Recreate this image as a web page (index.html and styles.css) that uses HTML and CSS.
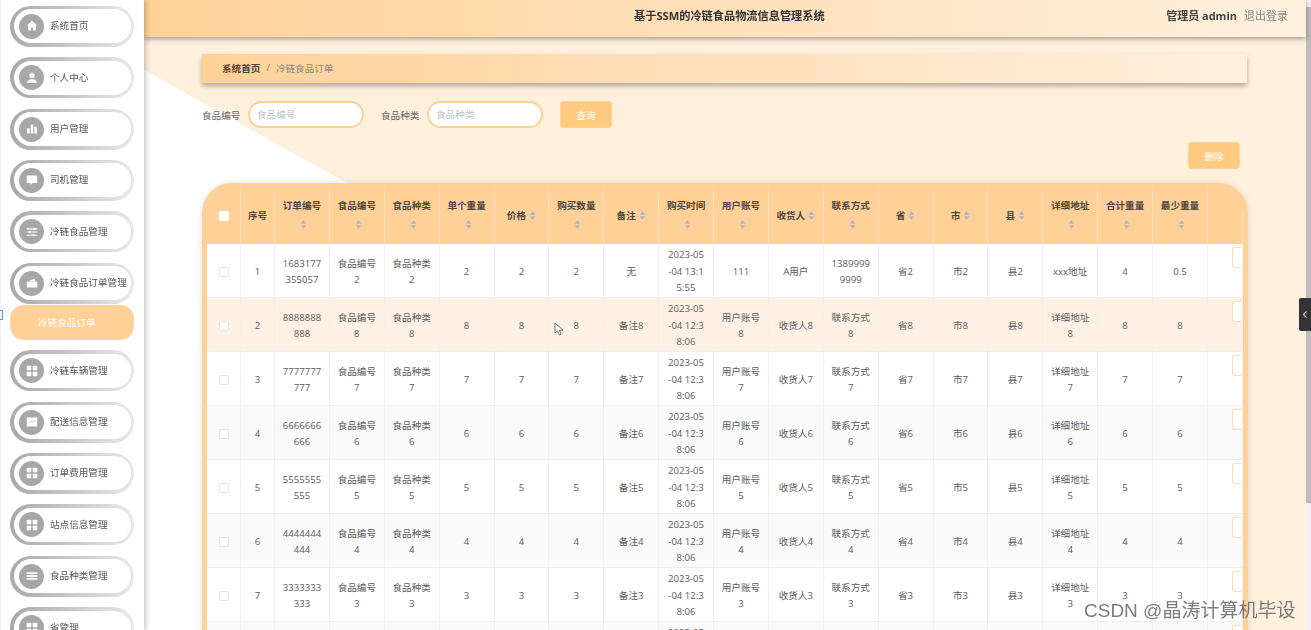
FILE: index.html
```html
<!DOCTYPE html>
<html lang="zh">
<head>
<meta charset="utf-8">
<title>基于SSM的冷链食品物流信息管理系统</title>
<link rel="stylesheet" href="styles.css">
</head>
<body>
<svg class="defs" width="0" height="0" aria-hidden="true">
  <symbol id="i-grid" viewBox="0 0 24 24"><rect x="5" y="5" width="6" height="6" rx=".8"/><rect x="13" y="5" width="6" height="6" rx=".8"/><rect x="5" y="13" width="6" height="6" rx=".8"/><rect x="13" y="13" width="6" height="6" rx=".8"/></symbol>
  <symbol id="i-sort" viewBox="0 0 10 14"><path d="M5 1 9 6H1z"/><path d="M5 13 1 8h8z"/></symbol>
</svg>
<div class="app">
  <aside class="sidebar">
    <a class="nav"><span class="nav-in"><span class="ico"><svg viewBox="0 0 24 24"><path d="M12 5 5 11.500h2V18h3.600v-4h2.800v4H17v-6.500h2z"/></svg></span>系统首页</span></a>
    <a class="nav"><span class="nav-in"><span class="ico"><svg viewBox="0 0 24 24"><circle cx="12" cy="8.500" r="3.500"/><path d="M5.500 18.500c0-3.500 3-5 6.500-5s6.500 1.500 6.500 5z"/></svg></span>个人中心</span></a>
    <a class="nav"><span class="nav-in"><span class="ico"><svg viewBox="0 0 24 24"><rect x="5.500" y="11" width="3.400" height="7"/><rect x="10.300" y="6" width="3.400" height="12"/><rect x="15.100" y="9" width="3.400" height="9"/></svg></span>用户管理</span></a>
    <a class="nav"><span class="nav-in"><span class="ico"><svg viewBox="0 0 24 24"><path d="M5 6h14v10h-6l-3 3v-3H5z"/></svg></span>司机管理</span></a>
    <a class="nav"><span class="nav-in"><span class="ico"><svg viewBox="0 0 24 24"><path d="M5 7h14v1.500H5zM5 11.300h14v1.500H5zM5 15.500h14V17H5z"/><circle cx="15" cy="7.700" r="1.500"/><circle cx="9" cy="12" r="1.500"/><circle cx="14" cy="16.200" r="1.500"/></svg></span>冷链食品管理</span></a>
    <div class="nav-group">
      <a class="nav"><span class="nav-in"><span class="ico"><svg viewBox="0 0 24 24"><path d="M5 10h14v8H5z"/><path d="M7 9.500 15 6l1.500 3.500z"/></svg></span>冷链食品订单管理</span></a>
      <a class="sub">冷链食品订单</a>
    </div>
    <a class="nav"><span class="nav-in"><span class="ico"><svg><use href="#i-grid"/></svg></span>冷链车辆管理</span></a>
    <a class="nav"><span class="nav-in"><span class="ico"><svg viewBox="0 0 24 24"><path d="M5 6h14v12H5zM8 14l3-3 2 2 3-3v-1l-3 3-2-2-3 3z" fill-rule="evenodd"/></svg></span>配送信息管理</span></a>
    <a class="nav"><span class="nav-in"><span class="ico"><svg><use href="#i-grid"/></svg></span>订单费用管理</span></a>
    <a class="nav"><span class="nav-in"><span class="ico"><svg><use href="#i-grid"/></svg></span>站点信息管理</span></a>
    <a class="nav"><span class="nav-in"><span class="ico"><svg viewBox="0 0 24 24"><path d="M5 7h14v2.400H5zM5 10.800h14v2.400H5zM5 14.600h14V17H5z"/></svg></span>食品种类管理</span></a>
    <a class="nav"><span class="nav-in"><span class="ico"><svg><use href="#i-grid"/></svg></span>省管理</span></a>
  </aside>

  <div class="main">
    <header class="topbar">
      <h1 class="title">基于SSM的冷链食品物流信息管理系统</h1>
      <div class="user"><b>管理员 admin</b><a>退出登录</a></div>
    </header>
    <div class="content">
      <nav class="crumb"><b>系统首页</b><i>/</i><span>冷链食品订单</span></nav>
      <form class="search">
        <label class="lbl">食品编号</label><input class="field" placeholder="食品编号">
        <label class="lbl lbl2">食品种类</label><input class="field" placeholder="食品种类">
        <button class="btn btn-q" type="button">查询</button>
      </form>
      <div class="actions"><button class="btn" type="button">删除</button></div>
      <section class="panel">
        <div class="wrap">
        <table>
          <colgroup><col class="c-s"><col class="c-s"><col span="17"><col class="c-a"></colgroup>
          <thead>
            <tr>
              <th class="tight"><span class="chk chk-h"></span></th><th class="tight">序号</th>
              <th>订单编号<svg class="sort"><use href="#i-sort"/></svg></th>
              <th>食品编号<svg class="sort"><use href="#i-sort"/></svg></th>
              <th>食品种类<svg class="sort"><use href="#i-sort"/></svg></th>
              <th>单个重量<svg class="sort"><use href="#i-sort"/></svg></th>
              <th>价格<svg class="sort"><use href="#i-sort"/></svg></th>
              <th>购买数量<svg class="sort"><use href="#i-sort"/></svg></th>
              <th>备注<svg class="sort"><use href="#i-sort"/></svg></th>
              <th>购买时间<svg class="sort"><use href="#i-sort"/></svg></th>
              <th>用户账号<svg class="sort"><use href="#i-sort"/></svg></th>
              <th>收货人<svg class="sort"><use href="#i-sort"/></svg></th>
              <th>联系方式<svg class="sort"><use href="#i-sort"/></svg></th>
              <th>省<svg class="sort"><use href="#i-sort"/></svg></th>
              <th>市<svg class="sort"><use href="#i-sort"/></svg></th>
              <th>县<svg class="sort"><use href="#i-sort"/></svg></th>
              <th>详细地址<svg class="sort"><use href="#i-sort"/></svg></th>
              <th>合计重量<svg class="sort"><use href="#i-sort"/></svg></th>
              <th>最少重量<svg class="sort"><use href="#i-sort"/></svg></th>
              <th></th>
            </tr>
          </thead>
          <tbody>
            <tr><td><span class="chk"></span></td><td>1</td><td>1683177355057</td><td>食品编号2</td><td>食品种类2</td><td>2</td><td>2</td><td>2</td><td>无</td><td class="date">2023-05<br>-04 13:1<br>5:55</td><td>111</td><td>A用户</td><td>13899999999</td><td>省2</td><td>市2</td><td>县2</td><td>xxx地址</td><td>4</td><td>0.5</td><td class="op"><span class="op-btn"></span></td></tr>
            <tr class="hover"><td><span class="chk"></span></td><td>2</td><td>8888888888</td><td>食品编号8</td><td>食品种类8</td><td>8</td><td>8</td><td>8</td><td>备注8</td><td class="date">2023-05<br>-04 12:3<br>8:06</td><td>用户账号8</td><td>收货人8</td><td>联系方式8</td><td>省8</td><td>市8</td><td>县8</td><td>详细地址8</td><td>8</td><td>8</td><td class="op"><span class="op-btn"></span></td></tr>
            <tr><td><span class="chk"></span></td><td>3</td><td>7777777777</td><td>食品编号7</td><td>食品种类7</td><td>7</td><td>7</td><td>7</td><td>备注7</td><td class="date">2023-05<br>-04 12:3<br>8:06</td><td>用户账号7</td><td>收货人7</td><td>联系方式7</td><td>省7</td><td>市7</td><td>县7</td><td>详细地址7</td><td>7</td><td>7</td><td class="op"><span class="op-btn"></span></td></tr>
            <tr class="alt"><td><span class="chk"></span></td><td>4</td><td>6666666666</td><td>食品编号6</td><td>食品种类6</td><td>6</td><td>6</td><td>6</td><td>备注6</td><td class="date">2023-05<br>-04 12:3<br>8:06</td><td>用户账号6</td><td>收货人6</td><td>联系方式6</td><td>省6</td><td>市6</td><td>县6</td><td>详细地址6</td><td>6</td><td>6</td><td class="op"><span class="op-btn"></span></td></tr>
            <tr><td><span class="chk"></span></td><td>5</td><td>5555555555</td><td>食品编号5</td><td>食品种类5</td><td>5</td><td>5</td><td>5</td><td>备注5</td><td class="date">2023-05<br>-04 12:3<br>8:06</td><td>用户账号5</td><td>收货人5</td><td>联系方式5</td><td>省5</td><td>市5</td><td>县5</td><td>详细地址5</td><td>5</td><td>5</td><td class="op"><span class="op-btn"></span></td></tr>
            <tr class="alt"><td><span class="chk"></span></td><td>6</td><td>4444444444</td><td>食品编号4</td><td>食品种类4</td><td>4</td><td>4</td><td>4</td><td>备注4</td><td class="date">2023-05<br>-04 12:3<br>8:06</td><td>用户账号4</td><td>收货人4</td><td>联系方式4</td><td>省4</td><td>市4</td><td>县4</td><td>详细地址4</td><td>4</td><td>4</td><td class="op"><span class="op-btn"></span></td></tr>
            <tr><td><span class="chk"></span></td><td>7</td><td>3333333333</td><td>食品编号3</td><td>食品种类3</td><td>3</td><td>3</td><td>3</td><td>备注3</td><td class="date">2023-05<br>-04 12:3<br>8:06</td><td>用户账号3</td><td>收货人3</td><td>联系方式3</td><td>省3</td><td>市3</td><td>县3</td><td>详细地址3</td><td>3</td><td>3</td><td class="op"><span class="op-btn"></span></td></tr>
            <tr class="alt"><td><span class="chk"></span></td><td>8</td><td>2222222222</td><td>食品编号2</td><td>食品种类2</td><td>2</td><td>2</td><td>2</td><td>备注2</td><td class="date">2023-05<br>-04 12:3<br>8:06</td><td>用户账号2</td><td>收货人2</td><td>联系方式2</td><td>省2</td><td>市2</td><td>县2</td><td>详细地址2</td><td>2</td><td>2</td><td class="op"><span class="op-btn"></span></td></tr>
          </tbody>
        </table>
        </div>
      </section>
    </div>
  </div>
  <div class="scrollbar"><div class="thumb"></div></div>
</div>

<div class="edge-mark"></div>
<svg class="cursor" viewBox="0 0 10 14"><path d="M1 1v10l2.500-2.200L5.200 13l1.800-.8L5.300 8.200H9z"/></svg>
<div class="handle"><svg viewBox="0 0 10 14"><path d="M7 3 3 7l4 4"/></svg></div>
<div class="watermark">CSDN @晶涛计算机毕设</div>
</body>
</html>
```
FILE: styles.css
```css
* { box-sizing: border-box; }
html, body { margin: 0; height: 100%; overflow: hidden; }
body {
  font-family: "Open Sans", "Noto Sans CJK SC", sans-serif;
  font-size: 9.6px;
  color: #5c5c5c;
  background: #fff;
}
.defs { position: absolute; }
.app { display: flex; height: 630px; overflow: hidden; filter: blur(.5px); }

/* sidebar */
.sidebar {
  flex: 0 0 144px;
  height: 630px;
  overflow: hidden;
  position: relative;
  z-index: 3;
  background: #fff;
  border-left: 1px solid #eee;
  box-shadow: 2px 0 5px rgba(0,0,0,.22);
  padding: 5.8px 0 0 9px;
  display: flex;
  flex-direction: column;
  gap: 10.4px;
}
.nav {
  flex: none;
  display: block;
  width: 124px;
  height: 41px;
  border-radius: 21px;
  padding: 3.500px;
  background: linear-gradient(90deg, #a9a9a9, #e9e9e9);
}
.nav-in {
  display: flex;
  align-items: center;
  gap: 6px;
  height: 100%;
  padding: 0 0 2px 5.500px;
  border-radius: 18px;
  background: #fff;
  color: #555;
  white-space: nowrap;
}
.ico {
  flex: none;
  width: 25px;
  height: 25px;
  margin-top: 2px;
  border-radius: 50%;
  background: #a9a6a9;
  display: flex;
  align-items: center;
  justify-content: center;
}
.ico svg { width: 18px; height: 18px; fill: #fff; }
.nav-group { flex: none; display: flex; flex-direction: column; }
.sub {
  display: block;
  width: 124px;
  height: 35px;
  margin-top: 1px;
  line-height: 36px;
  padding-left: 28px;
  border-radius: 14px;
  background: #ffd199;
  color: #fff;
}

/* main */
.main { flex: 1; min-width: 0; position: relative; background: #fff0de; }
.main::before {
  content: "";
  position: absolute;
  inset: 0;
  background: #fff;
  clip-path: polygon(0 70px, 1005px 630px, 0 630px);
}
.topbar {
  position: relative;
  z-index: 2;
  height: 37px;
  display: flex;
  align-items: center;
  justify-content: flex-end;
  padding: 0 18px 7px 0;
  background: linear-gradient(90deg, #ffd199, #fff0de);
  box-shadow: 0 2px 5px rgba(0,0,0,.35);
}
.title {
  position: absolute;
  left: 490px;
  margin: 0;
  font-size: 11.200px;
  font-weight: 700;
  color: #333;
  white-space: nowrap;
}
.user { display: flex; gap: 7px; font-size: 11px; color: #888; }
.user b { color: #444; }
.content { position: relative; height: 593px; padding: 17px 58px 0; overflow: hidden; }
.crumb {
  height: 29px;
  display: flex;
  align-items: center;
  padding: 0 0 2px 20px;
  width: 1045px;
  background: linear-gradient(90deg, #ffd199, #fff0de);
  box-shadow: 0 3px 5px rgba(0,0,0,.3);
  color: #888;
}
.crumb b { color: #444; }
.crumb i { font-style: normal; margin: 0 6px; color: #777; }
.search { display: flex; align-items: center; margin-top: 18px; height: 27px; }
.lbl { width: 46px; color: #666; }
.lbl2 { margin-left: 17px; }
.field {
  width: 116px;
  height: 27px;
  padding: 0 7px;
  border: 2px solid #ffd199;
  border-radius: 14px;
  background: #fff;
  font: inherit;
  outline: 0;
}
.field::placeholder { color: #c0c4cc; }
.btn {
  width: 52px;
  height: 27px;
  padding: 0;
  border: 1px solid #ffd199;
  border-radius: 3px;
  background: #ffcb80;
  color: #fff;
  font: inherit;
}
.btn-q { margin-left: 17px; }
.actions { display: flex; justify-content: flex-end; margin-top: 14px; margin-right: 8px; height: 28px; }

/* table */
.panel {
  margin-top: 13px;
  padding: 5px 5px 0;
  height: 460px;
  border-radius: 30px 30px 0 0;
  background: #ffd199;
  box-shadow: 0 0 6px rgba(0,0,0,.12);
  overflow: hidden;
}
.wrap { border-radius: 26px 26px 0 0; overflow: hidden; }
table {
  width: 1036px;
  table-layout: fixed;
  border-collapse: separate;
  border-spacing: 0;
  text-align: center;
}
.c-s { width: 34px; }
.c-a { width: 35px; }
th, td { padding: 0 7px; border-right: 1px solid #f3f0ee; word-break: break-all; }
th {
  height: 56px;
  padding-bottom: 2px;
  background: #ffd199;
  color: #4d4640;
  font-weight: 700;
  line-height: 19px;
  border-right-color: #ffe0ba;
}
th.tight { padding-left: 0; padding-right: 0; }
td {
  height: 54px;
  padding-top: 3px;
  line-height: 16.400px;
  background: #fff;
  border-bottom: 1px solid #efefef;
}
td.date { white-space: nowrap; }
.alt td { background: #fafafa; }
.hover td { background: #fff2e5; }
.chk {
  display: inline-block;
  width: 10px;
  height: 10px;
  border: 1px solid #e6e6e6;
  border-radius: 2px;
  background: #fff;
  vertical-align: middle;
}
.chk-h { border-color: #fff; }
.sort { width: 7px; height: 11px; margin-left: 3px; fill: #a9b3c6; vertical-align: -2px; }
td.op { padding: 3px 0 0; vertical-align: top; text-align: right; }
.op-btn {
  display: inline-block;
  width: 9px;
  height: 21px;
  margin-right: 1px;
  border: 1.500px solid #ffdcb0;
  border-right: 0;
  border-radius: 3px 0 0 3px;
  background: #fff;
  vertical-align: top;
}

/* scrollbar */
.scrollbar { flex: 0 0 5px; height: 630px; background: #f1f1f1; padding-top: 7px; }
.thumb { height: 496px; background: #bdbdbd; }

/* overlays */
.edge-mark { position: absolute; left: -2px; top: 310px; width: 5px; height: 10px; border: 1px solid #5b9bd5; }
.cursor { position: absolute; left: 554px; top: 322px; width: 10px; height: 14px; fill: #fff; stroke: #555; stroke-width: .8; }
.handle {
  position: absolute;
  left: 1299px;
  top: 298px;
  width: 12px;
  height: 33px;
  background: #333;
  border-radius: 2px 0 0 2px;
  display: flex;
  align-items: center;
  justify-content: center;
}
.handle svg { width: 8px; height: 11px; fill: none; stroke: #ccc; stroke-width: 1.500; }
.watermark {
  position: absolute;
  left: 1084px;
  top: 598px;
  font-family: "Liberation Sans", "Noto Sans CJK SC", sans-serif;
  font-size: 19px;
  line-height: 26px;
  color: rgba(90,90,90,.8);
  white-space: nowrap;
}
```
